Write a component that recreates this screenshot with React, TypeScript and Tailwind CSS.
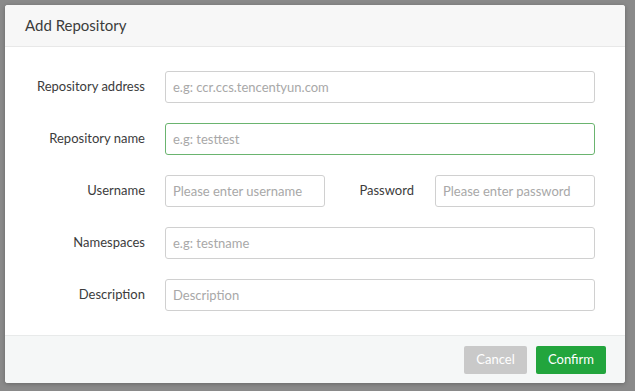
import React from 'react';

const font = { fontFamily: 'Lato, "Open Sans", sans-serif' };

function Field({ placeholder, focus, className }: { placeholder: string; focus?: boolean; className?: string }) {
  return (
    <input
      placeholder={placeholder}
      readOnly
      className={`h-[32px] rounded-[3px] border bg-white px-[7px] text-[13px] text-[#333] outline-none placeholder:text-[#a8a8a8] ${
        focus ? 'border-[#6ab46f]' : 'border-[#d0d0d0]'
      } ${className ?? 'w-[430px]'}`}
    />
  );
}

function Row({ label, children }: { label: string; children: React.ReactNode }) {
  return (
    <div className="flex items-center">
      <label className="w-[160px] shrink-0 pr-[20px] text-right text-[13px] text-[#3c3c3c]">{label}</label>
      {children}
    </div>
  );
}

export default function App() {
  return (
    <div className="h-[391px] w-[635px] bg-[#8a8a8a] pl-[5px] pt-[5px]" style={font}>
      <div className="flex h-[378px] w-[620px] flex-col overflow-hidden rounded-[3px] bg-white shadow-[0_1px_4px_rgba(0,0,0,0.25)]">
        <div className="flex h-[42px] items-center border-b border-[#e8e8e8] bg-[#f7f7f7] pl-[20px] text-[15px] text-[#3c3c3c]">
          Add Repository
        </div>
        <div className="flex flex-1 flex-col gap-[20px] pt-[24px]">
          <Row label="Repository address">
            <Field placeholder="e.g: ccr.ccs.tencentyun.com" />
          </Row>
          <Row label="Repository name">
            <Field placeholder="e.g: testtest" focus />
          </Row>
          <Row label="Username">
            <Field placeholder="Please enter username" className="w-[160px]" />
            <label className="w-[110px] pr-[21px] text-right text-[13px] text-[#3c3c3c]">Password</label>
            <Field placeholder="Please enter password" className="w-[160px]" />
          </Row>
          <Row label="Namespaces">
            <Field placeholder="e.g: testname" />
          </Row>
          <Row label="Description">
            <Field placeholder="Description" />
          </Row>
        </div>
        <div className="flex h-[48px] items-center justify-end gap-[9px] border-t border-[#e8eaea] bg-[#f5f7f7] pr-[19px]">
          <button className="h-[28px] w-[63px] rounded-[2px] bg-[#c9c9c9] text-[13px] text-white">Cancel</button>
          <button className="h-[28px] w-[70px] rounded-[2px] bg-[#22a53d] text-[13px] text-white">Confirm</button>
        </div>
      </div>
    </div>
  );
}
